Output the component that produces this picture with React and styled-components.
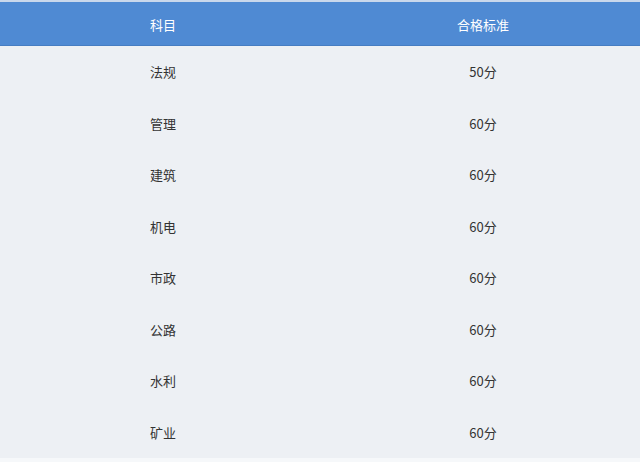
import React from 'react'
import styled, { createGlobalStyle } from 'styled-components'

const GlobalStyle = createGlobalStyle`
  html, body {
    margin: 0;
    padding: 0;
    background: #edf0f4;
  }
  body {
    font-family: "Microsoft YaHei", "Noto Sans CJK SC", "Liberation Sans", sans-serif;
  }
`

const Table = styled.div`
  width: 640px;
  height: 462px;
  display: flex;
  flex-direction: column;
  background: #edf0f4;
  border-top: 2px solid #c9d8ec;
  border-bottom: 4px solid #f6f8fa;
  box-sizing: border-box;
`

const Row = styled.div`
  display: grid;
  grid-template-columns: 326px 1fr;
  align-items: center;
  height: ${p => (p.$head ? '44px' : '51.5px')};
  background: ${p => (p.$head ? '#4f8ad3' : 'transparent')};
  border-bottom: ${p => (p.$head ? '1px solid #467dc2' : 'none')};
  box-sizing: border-box;
  color: ${p => (p.$head ? '#ffffff' : '#333333')};
  font-size: 13px;
`

const Cell = styled.div`
  text-align: center;
  padding-top: ${p => (p.$head ? '1px' : '0')};
`

const rows = [
  ['法规', '50分'],
  ['管理', '60分'],
  ['建筑', '60分'],
  ['机电', '60分'],
  ['市政', '60分'],
  ['公路', '60分'],
  ['水利', '60分'],
  ['矿业', '60分'],
]

export default function App() {
  return (
    <>
      <GlobalStyle />
      <Table>
        <Row $head>
          <Cell $head>科目</Cell>
          <Cell $head>合格标准</Cell>
        </Row>
        {rows.map(([subject, score]) => (
          <Row key={subject}>
            <Cell>{subject}</Cell>
            <Cell>{score}</Cell>
          </Row>
        ))}
      </Table>
    </>
  )
}
